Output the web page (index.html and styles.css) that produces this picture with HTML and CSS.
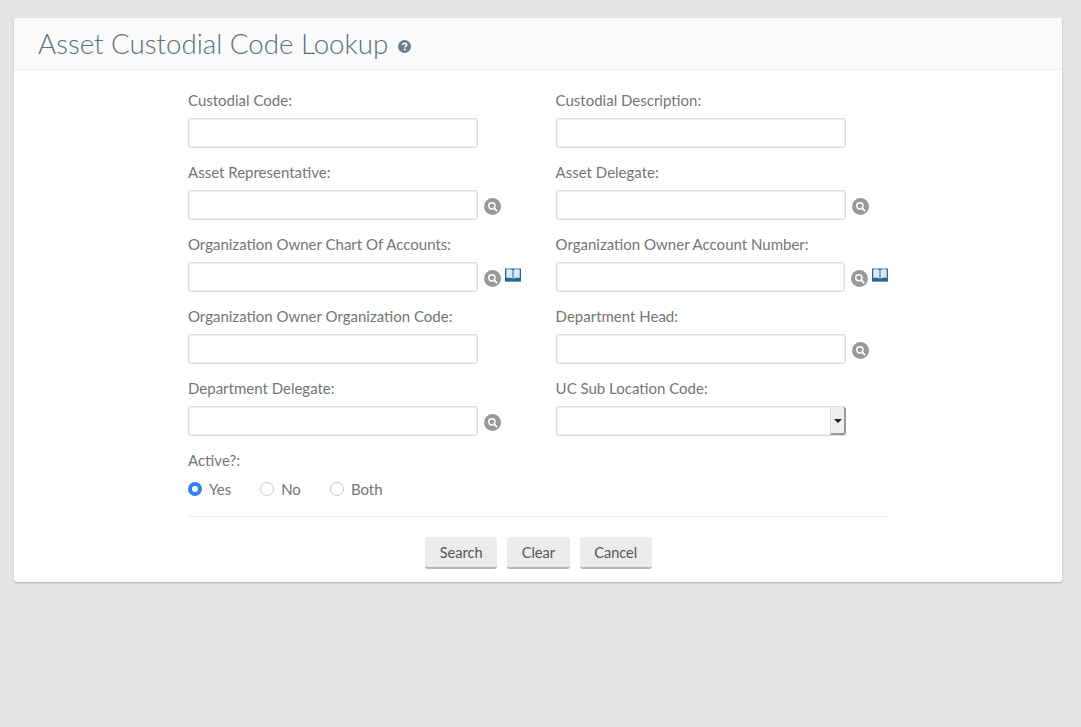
FILE: index.html
```html
<!DOCTYPE html>
<html lang="en">
<head>
    <meta charset="UTF-8" />
    <meta name="viewport" content="width=device-width, initial-scale=1" />
    <title>Asset Custodial Code Lookup</title>
    <link rel="stylesheet" href="styles.css">
</head>
<body>
    <svg class="sprites" width="0" height="0" aria-hidden="true">
        <symbol id="icon-search" viewBox="0 0 18 18">
            <circle cx="9" cy="9" r="9" fill="#999"/>
            <circle cx="8.3" cy="8.3" r="3.3" fill="none" stroke="#fff" stroke-width="1.6"/>
            <path d="M10.8 10.8 L13.4 13.4" stroke="#fff" stroke-width="2" stroke-linecap="round"/>
        </symbol>
        <symbol id="icon-book" viewBox="0 0 18 14">
            <path d="M1 .5 H17 V12.5 H1 Z" fill="#1f6a9e"/>
            <path d="M2.3 1.6 C4.8 1 7.5 1.2 9 2.4 C10.5 1.2 13.2 1 15.7 1.6 V10 C13.2 9.5 10.5 9.7 9 10.9 C7.5 9.7 4.8 9.5 2.3 10 Z" fill="#dbe9f2"/>
            <path d="M9 2.4 V10.9" stroke="#1f6a9e" stroke-width="1"/>
            <path d="M1 12.2 H17 V13.6 H1 Z" fill="#14507c"/>
        </symbol>
    </svg>

    <main class="panel">
        <header class="panel-head">
            <h1>Asset Custodial Code Lookup</h1>
            <svg class="help" viewBox="0 0 14 14" aria-hidden="true">
                <circle cx="7" cy="7" r="7" fill="#6f7b85"/>
                <path d="M4.9 5.5 C4.9 4.2 5.9 3.5 7.1 3.5 C8.4 3.5 9.3 4.2 9.3 5.3 C9.3 6.8 7.3 6.8 7.3 8.2" fill="none" stroke="#fff" stroke-width="1.7"/>
                <rect x="6.3" y="9.3" width="2" height="1.9" fill="#fff"/>
            </svg>
        </header>

        <form class="lookup">
            <div class="fields">
                <div class="field">
                    <label>Custodial Code:</label>
                    <div class="control"><input type="text"></div>
                </div>
                <div class="field">
                    <label>Custodial Description:</label>
                    <div class="control"><input type="text"></div>
                </div>
                <div class="field">
                    <label>Asset Representative:</label>
                    <div class="control"><input type="text"><svg class="search"><use href="#icon-search"/></svg></div>
                </div>
                <div class="field">
                    <label>Asset Delegate:</label>
                    <div class="control"><input type="text"><svg class="search"><use href="#icon-search"/></svg></div>
                </div>
                <div class="field">
                    <label>Organization Owner Chart Of Accounts:</label>
                    <div class="control"><input type="text"><svg class="search"><use href="#icon-search"/></svg><svg class="book"><use href="#icon-book"/></svg></div>
                </div>
                <div class="field">
                    <label>Organization Owner Account Number:</label>
                    <div class="control"><input type="text"><svg class="search"><use href="#icon-search"/></svg><svg class="book"><use href="#icon-book"/></svg></div>
                </div>
                <div class="field">
                    <label>Organization Owner Organization Code:</label>
                    <div class="control"><input type="text"></div>
                </div>
                <div class="field">
                    <label>Department Head:</label>
                    <div class="control"><input type="text"><svg class="search"><use href="#icon-search"/></svg></div>
                </div>
                <div class="field">
                    <label>Department Delegate:</label>
                    <div class="control"><input type="text"><svg class="search"><use href="#icon-search"/></svg></div>
                </div>
                <div class="field">
                    <label>UC Sub Location Code:</label>
                    <div class="control">
                        <div class="select"><span class="select-arrow"></span></div>
                    </div>
                </div>
            </div>

            <div class="field-active">
                <label>Active?:</label>
                <div class="radios">
                    <span class="radio-item"><span class="radio checked"></span>Yes</span>
                    <span class="radio-item"><span class="radio"></span>No</span>
                    <span class="radio-item"><span class="radio"></span>Both</span>
                </div>
            </div>

            <div class="actions">
                <button type="button">Search</button>
                <button type="button">Clear</button>
                <button type="button">Cancel</button>
            </div>
        </form>
    </main>
</body>
</html>
```

FILE: styles.css
```css
body {
    margin: 0;
    min-height: 727px;
    box-sizing: border-box;
    padding: 18px 19px 0 14px;
    background: #e5e5e5;
    font-family: Lato, "Open Sans", sans-serif;
    font-size: 15px;
    color: #757575;
}
.sprites {
    position: absolute;
}
.panel {
    background: #fff;
    border-radius: 3px;
    box-shadow: 0 1px 2px rgba(0, 0, 0, 0.25);
    height: 564px;
}
.panel-head {
    display: flex;
    align-items: center;
    height: 52px;
    box-sizing: border-box;
    padding-left: 24px;
    background: #fafafa;
    border-bottom: 1px solid #ececec;
    border-radius: 3px 3px 0 0;
}
h1 {
    margin: 0;
    font-size: 27.7px;
    font-weight: 300;
    color: #5f6e7a;
}
.help {
    width: 13px;
    height: 13px;
    margin: 6px 0 0 10px;
}
.lookup {
    width: 701px;
    margin-left: 174px;
}
.fields {
    display: grid;
    grid-template-columns: 367.6px 333px;
    padding-top: 21px;
}
.field {
    height: 72px;
}
label {
    display: block;
    height: 19px;
    line-height: 19px;
}
.control {
    display: flex;
    margin-top: 8px;
    position: relative;
}
input[type="text"], .select {
    width: 290px;
    height: 30px;
    box-sizing: border-box;
    border: 1px solid #dcdcdc;
    border-radius: 3px;
    box-shadow: inset 0 0 0 1px #f1f1f1;
    background: #fff;
    padding: 0;
}
.select {
    position: relative;
    border-right: 0;
}
.select-arrow {
    position: absolute;
    top: 0;
    right: 0;
    bottom: 0;
    width: 13px;
    background: #efefef;
    border-left: 1px solid #ddd;
    border-right: 2px solid #999;
    border-bottom: 2px solid #999;
    border-radius: 0 3px 3px 0;
}
.select-arrow::after {
    content: "";
    position: absolute;
    top: 12px;
    left: 3px;
    border-left: 4px solid transparent;
    border-right: 4px solid transparent;
    border-top: 4px solid #222;
}
.search {
    width: 17px;
    height: 17px;
    margin: 8px 0 0 6px;
}
.book {
    width: 18px;
    height: 14px;
    margin: 6px 0 0 3px;
}
.radios {
    display: flex;
    gap: 29px;
    margin-top: 9px;
    height: 20px;
    align-items: center;
}
.radio-item {
    display: flex;
    align-items: center;
    gap: 7px;
}
.radio {
    width: 14px;
    height: 14px;
    box-sizing: border-box;
    border: 1px solid #c8c8c8;
    border-radius: 50%;
    background: #fff;
}
.radio.checked {
    border: 4.5px solid #2f80f0;
}
.actions {
    display: flex;
    justify-content: center;
    gap: 10px;
    margin-top: 17px;
    padding-top: 20px;
    border-top: 1px solid #ececec;
}
button {
    height: 32px;
    padding: 0 14.5px;
    background: #ececec;
    color: #555;
    border: none;
    border-bottom: 2px solid #b5b5b5;
    border-radius: 3px;
    font-family: inherit;
    font-size: 14.6px;
}
```
